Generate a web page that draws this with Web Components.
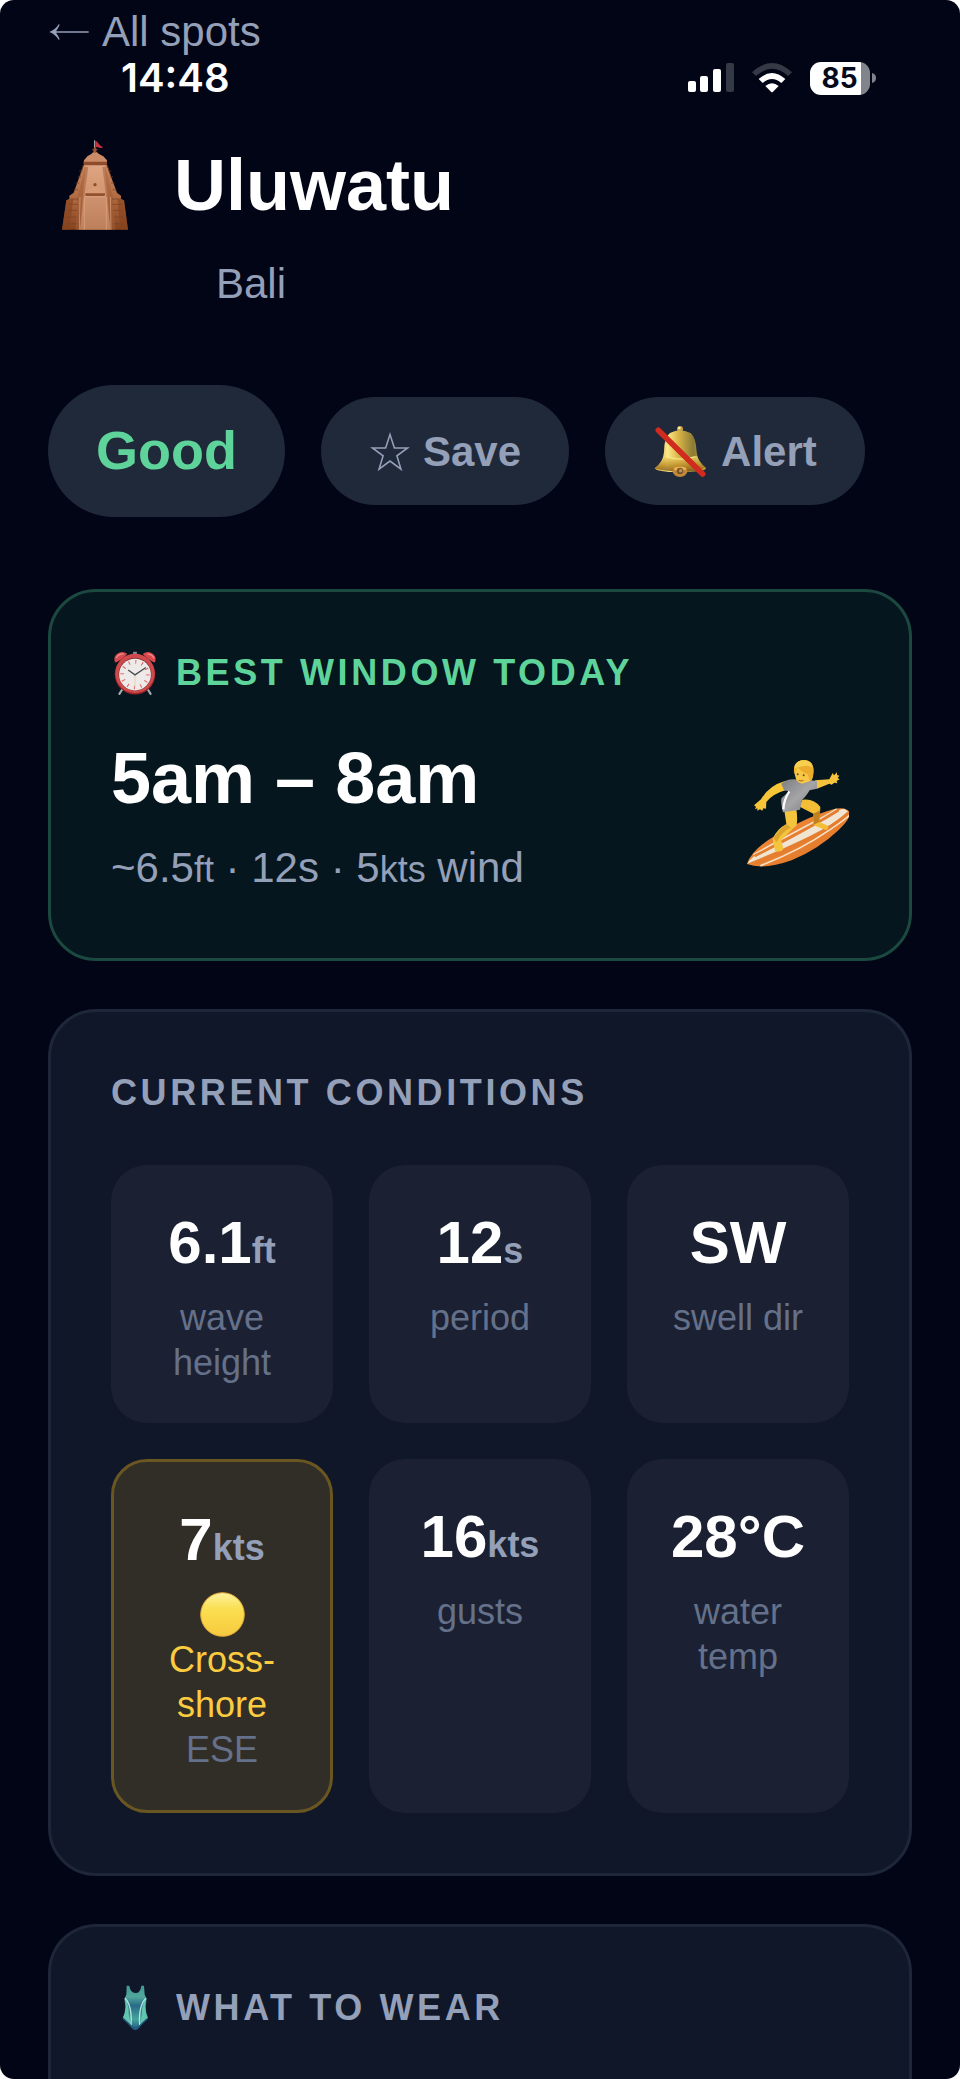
<!DOCTYPE html>
<html lang="en">
<head>
<meta charset="utf-8">
<meta name="viewport" content="width=device-width">
<title>Uluwatu – Bali</title>
<style>
  html { background: #fff; }
  body {
    margin: 0;
    min-height: 100vh;
    display: flex;
    font-family: "Liberation Sans", Arial, sans-serif;
    --muted: #949fb8;
    --dim: #65718a;
    --green: #5fd49a;
    --slate: #20293a;
    color: #fff;
  }
</style>
</head>
<body>
<spot-page></spot-page>

<template id="t-page">
  <style>
    :host {
      flex: 1; min-width: 0; display: flex; flex-direction: column;
      background: #020515; border-radius: 14px; overflow: hidden;
    }
    header { display: flex; flex-direction: column; padding: 0 48px; }
    .back { padding-top: 4px; line-height: 56px; font-size: 42px; }
    .back a { display: flex; align-items: center; gap: 12px; color: var(--muted); text-decoration: none; }
    .title { display: flex; align-items: center; gap: 36px; margin-top: 41px; }
    h1 { margin: 0; font-size: 72px; line-height: 96px; }
    .region { margin: 21px 0 0; padding-left: 168px; font-size: 42px; line-height: 60px; color: var(--muted); }
    .actions { display: flex; align-items: center; gap: 36px; margin: 71px 48px 72px; }
    main { flex: 1; display: flex; flex-direction: column; gap: 48px; padding: 0 48px; }
    .window { display: flex; align-items: center; justify-content: space-between; margin-top: 36px; }
    .hours { margin: 0; font-size: 72px; font-weight: 700; line-height: 96px; }
    .detail { margin: 12px 0 0; font-size: 42px; line-height: 60px; color: var(--muted); }
    small { font-size: 36px; line-height: 36px; }
    .grid { display: grid; grid-template-columns: repeat(3, minmax(0, 1fr)); gap: 36px; margin-top: 51px; }
    .warn { color: #fbcb40; }
    .dot { display: block; margin: 0 auto; }
  </style>
  <header>
    <div class="back"><a href="#spots"><emoji-icon name="arrow" style="--size: 42px"></emoji-icon>All spots</a></div>
    <status-bar></status-bar>
    <div class="title"><emoji-icon name="temple" style="--size: 90px"></emoji-icon><h1>Uluwatu</h1></div>
    <p class="region">Bali</p>
  </header>
  <div class="actions">
    <rating-badge>Good</rating-badge>
    <pill-button><emoji-icon slot="icon" name="star" style="--size: 42px"></emoji-icon>Save</pill-button>
    <pill-button><emoji-icon slot="icon" name="bell" style="--size: 56px"></emoji-icon>Alert</pill-button>
  </div>
  <main>
    <info-card tone="green">
      <emoji-icon slot="icon" name="clock" style="--size: 48px"></emoji-icon>
      <span slot="heading">BEST WINDOW TODAY</span>
      <div class="window">
        <div>
          <p class="hours">5am – 8am</p>
          <p class="detail">~6.5<small>ft</small> · 12s · 5<small>kts</small> wind</p>
        </div>
        <emoji-icon name="surfer" style="--size: 108px"></emoji-icon>
      </div>
    </info-card>
    <info-card>
      <span slot="heading">CURRENT CONDITIONS</span>
      <div class="grid">
        <metric-tile value="6.1" unit="ft">wave height</metric-tile>
        <metric-tile value="12" unit="s">period</metric-tile>
        <metric-tile value="SW">swell dir</metric-tile>
        <metric-tile value="7" unit="kts" tone="warn"><emoji-icon class="dot" name="dot" style="--size: 45px"></emoji-icon><span class="warn">Cross-<br>shore</span><br>ESE</metric-tile>
        <metric-tile value="16" unit="kts">gusts</metric-tile>
        <metric-tile value="28°C">water temp</metric-tile>
      </div>
    </info-card>
    <info-card tone="open">
      <emoji-icon slot="icon" name="swimsuit" style="--size: 48px"></emoji-icon>
      <span slot="heading">WHAT TO WEAR</span>
    </info-card>
  </main>
</template>

<template id="t-status">
  <style>
    :host { display: flex; align-items: center; justify-content: space-between; height: 36px; padding: 0 36px 0 73px; }
    time { font: 600 40px/36px Inter, sans-serif; }
    .right { display: flex; align-items: center; gap: 18px; }
    svg { display: block; }
    .battery { display: flex; align-items: center; gap: 2px; }
    .cell {
      width: 60px; height: 33px; border-radius: 11px; box-sizing: border-box; padding-right: 1px;
      background: linear-gradient(90deg, #fff 51px, #82848c 51px);
      color: #050a1c; text-align: center; font: 700 28px/33px Inter, sans-serif;
    }
  </style>
  <time>14:48</time>
  <div class="right">
    <svg width="46" height="30" viewBox="0 0 46 30">
      <g fill="#fff"><rect y="18" width="8" height="11" rx="2"/><rect x="12" y="13" width="8" height="16" rx="2"/><rect x="25" y="6" width="8" height="23" rx="2"/></g>
      <rect x="38" width="8" height="29" rx="2" fill="#353845"/>
    </svg>
    <svg width="40" height="30" viewBox="0 0 120 90">
      <path d="M0 28Q60-28 120 28L108 39Q60-4 12 39Z" fill="#353845"/>
      <path d="M20 48Q60 12 100 48L88 60Q60 36 32 60Z" fill="#fff"/>
      <path d="M40 69Q60 53 80 69L63 86Q60 89 57 86Z" fill="#fff"/>
    </svg>
    <div class="battery"><div class="cell">85</div>
      <svg width="4" height="10" viewBox="0 0 4 10"><path d="M0 0Q4 1 4 5T0 10Z" fill="#82848c"/></svg>
    </div>
  </div>
</template>

<template id="t-badge">
  <style>
    :host { display: block; padding: 23px 48px 25px; border-radius: 66px; background: var(--slate); color: var(--green); font-size: 54px; font-weight: 700; line-height: 84px; }
  </style>
  <slot></slot>
</template>

<template id="t-pill">
  <style>
    :host { display: block; }
    button {
      display: flex; align-items: center; gap: 12px; padding: 25px 48px 23px; border: 0; border-radius: 54px;
      background: var(--slate); color: var(--muted); font: 700 42px/60px "Liberation Sans", Arial, sans-serif; cursor: pointer;
    }
  </style>
  <button type="button"><slot name="icon"></slot><span><slot></slot></span></button>
</template>

<template id="t-card">
  <style>
    :host { display: block; padding: 60px; border: 3px solid #1e2739; border-radius: 48px; background: #101729; color: #fff; --heading: var(--muted); }
    :host([tone="green"]) { background: #05161e; border-color: #1b493f; --heading: var(--green); }
    :host([tone="open"]) { flex: 1; border-bottom: 0; border-radius: 48px 48px 0 0; padding-bottom: 0; }
    h2 { display: flex; align-items: center; gap: 17px; height: 42px; margin: 0; font-size: 36px; line-height: 42px; letter-spacing: 0.1em; color: var(--heading); }
  </style>
  <section><h2><slot name="icon"></slot><slot name="heading"></slot></h2><slot></slot></section>
</template>

<template id="t-tile">
  <style>
    :host { display: block; padding: 36px 36px 38px; border-radius: 36px; background: #1b2132; text-align: center; }
    :host([tone="warn"]) { padding: 36px 33px 38px; border: 3px solid #695621; background: #312e27; }
    .value { font-size: 60px; font-weight: 700; line-height: 84px; }
    .unit { font-size: 36px; line-height: 36px; color: var(--muted); }
    .label { margin-top: 10px; font-size: 36px; line-height: 45px; color: var(--dim); }
  </style>
  <div class="value"><span class="number"></span><span class="unit"></span></div>
  <div class="label"><slot></slot></div>
</template>

<script>
  const ICONS = {
    arrow: `<svg viewBox="0 0 126 126"><path d="M10 63H122" fill="none" stroke="#949fb8" stroke-width="5"/><path d="M4 63Q22 56 33 39L35 41Q30 53 25 59V67Q30 73 35 85L33 87Q22 70 4 63Z" fill="#949fb8"/></svg>`,
    star: `<svg viewBox="-4 -4 134 134"><path d="M63 7L77 50H119L85 75L98 118L63 92L28 118L41 75L7 50H49Z" fill="none" stroke="#949fb8" stroke-width="5"/></svg>`,
    dot: `<svg viewBox="0 0 45 45"><defs><linearGradient id="a" x2="0" y2="1"><stop stop-color="#fdf3a0"/><stop offset=".35" stop-color="#fae055"/><stop offset=".6" stop-color="#fad748"/><stop offset="1" stop-color="#f6c93f"/></linearGradient></defs><circle cx="22.500" cy="22.500" r="21.800" fill="url(#a)" stroke="#e6a93a"/></svg>`,
    temple: `<svg viewBox="24 59 270 270"><defs>
      <linearGradient id="body" x2="0" y2="1"><stop stop-color="#e0a582"/><stop offset="1" stop-color="#bd7f5c"/></linearGradient>
      <linearGradient id="side" x2="0" y2="1"><stop stop-color="#c98860"/><stop offset=".5" stop-color="#b06b42"/><stop offset="1" stop-color="#85431f"/></linearGradient></defs>
      <path d="M164 60V84" stroke="#c9c4c8" stroke-width="3"/><path d="M166 61Q172 62 176 70Q181 78 190 80Q182 86 174 81L166 80Z" fill="#c4343c"/>
      <path d="M66 328L79 240L88 236V226L101 217L132 132H199L231 217L243 226V236L252 240L264 328Z" fill="url(#side)"/>
      <path d="M137 132H194L212 328H119Z" fill="url(#body)"/>
      <path d="M135 140L110 240L106 328H120L132 230L145 140ZM196 140L222 240L226 328H212L199 230L187 140Z" fill="#a35f38" opacity=".55"/>
      <path d="M79 240L100 236L88 328H66ZM252 240L232 236L242 328H264Z" fill="#87431e" opacity=".6"/>
      <path d="M130 134L119 170M128 152H118M123 170H113M118 188H107M114 208H102M202 134L213 170M204 152H214M209 170H219M213 188H224M218 208H229M88 236H116M86 252H114M84 270H112M82 290H110M80 310H109M216 236H243M217 252H247M219 270H248M221 290H250M222 310H252" stroke="#7d4324" stroke-width="3" opacity=".7"/>
      <path d="M120 230L118 328M133 230V328M199 230V328M211 230L213 328" stroke="#e0a884" stroke-width="3" opacity=".65"/>
      <path d="M132 120L142 108Q154 103 160 95H170Q177 103 190 108L201 120V128Q201 134 195 134H137Q131 134 131 128Z" fill="#cb8b67"/>
      <path d="M131 124H201V129Q200 135 194 135H138Q132 135 131 129Z" fill="#8e4c2a"/>
      <path d="M155 87H174L169 91V97H160V91Z" fill="#9a5630"/><circle cx="165" cy="85" r="4" fill="#9a5630"/>
      <path d="M136 221V214L147 207Q157 205 160 199H170Q173 205 184 207L195 214V221Z" fill="#d79b75"/><path d="M136 219H195V224Q194 228 189 228H142Q137 228 136 224Z" fill="#93502d"/><circle cx="165" cy="193" r="5" fill="#8d4d2c"/><path d="M136 229H195" stroke="#e9b899" stroke-width="2"/>
    </svg>`,
    bell: `<svg viewBox="519 160 168 168"><defs>
      <linearGradient id="gold"><stop stop-color="#c79b30"/><stop offset=".25" stop-color="#fbe98a"/><stop offset=".45" stop-color="#dcb748"/><stop offset=".75" stop-color="#8c7b35"/><stop offset="1" stop-color="#c8a940"/></linearGradient>
      <linearGradient id="rim" x2="0" y2="1"><stop stop-color="#f7df68"/><stop offset=".6" stop-color="#b98a27"/><stop offset="1" stop-color="#7c5317"/></linearGradient></defs>
      <circle cx="600" cy="175" r="9" fill="#c9a040"/><circle cx="598" cy="172" r="4" fill="#fff0ad"/>
      <path d="M524 293Q550 274 552 244Q552 200 570 187Q586 179 600 179T632 187Q648 201 650 244Q653 274 678 293Q676 304 600 305Q528 304 524 293Z" fill="url(#gold)"/>
      <path d="M552 256Q600 268 651 256Q657 276 678 291Q640 303 600 303T524 293Q546 278 552 256Z" fill="url(#rim)" opacity=".8"/>
      <path d="M558 258Q600 273 646 258" fill="none" stroke="#fff19a" stroke-width="4" opacity=".6"/>
      <ellipse cx="600" cy="302" rx="22" ry="17" fill="#c28739"/><path d="M582 292Q600 284 619 292L616 299Q600 292 585 300Z" fill="#efb44e"/><circle cx="600" cy="301" r="10" fill="#7a572a"/><circle cx="602" cy="300" r="5" fill="#bd9455"/>
      <path d="M535 179L668 310" stroke="#d02b1e" stroke-width="17" stroke-linecap="round"/></svg>`,
    clock: `<svg viewBox="-5 -5 154 154">
      <path d="M34 120L22 139M110 120L122 139" stroke="#a5a9b2" stroke-width="7" stroke-linecap="round"/><path d="M66 4H78V14H66Z" fill="#8b8f98"/>
      <path d="M7 36Q2 20 15 10Q30 0 47 10Q36 26 10 38ZM137 36Q142 20 129 10Q114 0 97 10Q108 26 134 38Z" fill="#d6494e"/><path d="M12 24Q20 10 36 11M112 11Q128 13 133 25" fill="none" stroke="#f08c8a" stroke-width="4"/>
      <circle cx="72" cy="76" r="65" fill="#9e2529"/><circle cx="72" cy="73" r="63" fill="#cf4a4c"/><circle cx="72" cy="76" r="53" fill="#8c3334"/><circle cx="72" cy="77" r="51" fill="#eeeae9"/>
      <circle cx="72" cy="77" r="41" fill="none" stroke="#df5c5c" stroke-width="12" stroke-dasharray="3 18.470"/>
      <path d="M72 78V116" stroke="#e8cfa0" stroke-width="3"/><path d="M50 62L72 78L107 54" fill="none" stroke="#4c4c4c" stroke-width="4"/></svg>`,
    surfer: `<svg viewBox="63 90 324 324"><defs><linearGradient id="board" x2="1" y2="1"><stop stop-color="#f28f3d"/><stop offset="1" stop-color="#df7426"/></linearGradient><linearGradient id="suit" x2="1" y2="1"><stop stop-color="#7c7d80"/><stop offset=".5" stop-color="#a5a5a8"/><stop offset="1" stop-color="#77777b"/></linearGradient></defs>
      <path d="M81 402Q92 366 145 330Q250 264 340 238Q374 229 388 245Q396 262 356 300Q295 358 215 391Q130 421 81 402Z" fill="url(#board)"/>
      <path d="M82 401Q91 384 118 370Q200 326 282 282Q345 240 372 236L384 244Q340 285 270 318Q190 357 82 401Z" fill="#efe5d2"/>
      <path d="M101 374Q205 316 292 271Q335 248 350 237M121 407Q240 362 330 299Q376 267 388 256" fill="none" stroke="#f4e1c5" stroke-width="5"/>
      <path d="M104 378Q208 326 298 275Q340 250 356 240M106 400Q230 349 315 300Q360 272 382 252" fill="none" stroke="#e57d31" stroke-width="8"/>
      <path d="M247 209Q282 204 301 231L298 276L324 287Q328 298 317 300L281 286L280 251L239 230Z" fill="#f3bd35"/><path d="M280 251L301 240L298 276L281 284Z" fill="#a96817" opacity=".7"/>
      <path d="M192 235L229 238Q234 271 229 287Q211 301 184 331L190 357Q185 368 165 363L158 326Q171 297 199 282Z" fill="#f4c43d"/><path d="M199 282Q173 304 161 324L169 337Q187 303 213 293Z" fill="#c98a1f" opacity=".55"/>
      <path d="M195 153Q146 167 123 208L102 226L108 230L105 238L112 235V242L120 238L127 242L130 235L138 236L139 216Q157 191 201 179Z" fill="#f6c638"/>
      <path d="M285 151L328 148L338 129L342 136L351 127V135L358 137L353 144L359 148L350 153L352 160L343 158L335 164L328 161L291 176Z" fill="#f5c33c"/>
      <path d="M184 161Q201 146 225 148L245 158L272 151L291 153V176L269 181Q257 201 246 210L240 239L189 247Q182 220 184 205L208 184L192 181Z" fill="url(#suit)"/>
      <path d="M208 184Q192 207 190 238" fill="none" stroke="#fafafa" stroke-width="7"/>
      <path d="M222 125Q219 93 250 90Q284 90 280 130Q279 151 269 154L255 158Q242 165 229 151Z" fill="#f7c746"/>
      <path d="M222 129Q219 95 250 90Q284 90 280 130Q279 148 270 153L263 132Q246 129 234 112Q227 116 226 128Z" fill="#ecad2f"/>
      <path d="M224 116Q225 92 252 91Q275 93 278 114Q265 100 224 116Z" fill="#f8cf4e"/>
      <circle cx="233" cy="133" r="3" fill="#6d4a20"/><circle cx="251" cy="136" r="3" fill="#6d4a20"/><path d="M236 151Q243 155 250 151" fill="none" stroke="#a56518" stroke-width="3"/>
    </svg>`,
    swimsuit: `<svg viewBox="240 400 144 144"><defs><linearGradient id="swim" x2="0" y2="1"><stop stop-color="#3f9a95"/><stop offset=".25" stop-color="#51a79c"/><stop offset=".45" stop-color="#286a87"/><stop offset=".75" stop-color="#45a49d"/><stop offset="1" stop-color="#1e5682"/></linearGradient></defs>
      <path d="M287 405H295Q298 426 313 427T331 405H339L341 432L347 444L344 468Q344 482 351 503Q334 517 324 532Q313 545 302 532Q291 517 275 503Q283 486 283 468L280 444L286 432Z" fill="url(#swim)"/>
      <path d="M282 443Q295 464 293 490L299 522L276 503Q283 486 284 468ZM345 443Q331 464 333 490L327 522L350 503Q343 486 343 468Z" fill="#62c5b0"/>
      <path d="M282 443Q304 465 300 524M345 443Q322 465 326 524" fill="none" stroke="#b6e5df" stroke-width="4"/>
      <path d="M276 503L300 525Q313 538 326 525L350 503" fill="none" stroke="#1d5b79" stroke-width="4"/></svg>`
  };

  class TemplateElement extends HTMLElement {
    constructor() {
      super();
      const source = document.getElementById(this.constructor.template);
      this.attachShadow({ mode: "open" }).append(source.content.cloneNode(true));
    }
  }

  customElements.define("emoji-icon", class extends HTMLElement {
    connectedCallback() {
      if (this.shadowRoot) return;
      this.attachShadow({ mode: "open" }).innerHTML =
        `<style>:host{display:block;flex:none;width:var(--size);height:var(--size)}svg{display:block;width:100%;height:100%}</style>` +
        ICONS[this.getAttribute("name")];
    }
  });

  customElements.define("metric-tile", class extends TemplateElement {
    static template = "t-tile";
    connectedCallback() {
      this.shadowRoot.querySelector(".number").textContent = this.getAttribute("value");
      this.shadowRoot.querySelector(".unit").textContent = this.getAttribute("unit") || "";
    }
  });

  customElements.define("status-bar", class extends TemplateElement { static template = "t-status"; });
  customElements.define("rating-badge", class extends TemplateElement { static template = "t-badge"; });
  customElements.define("pill-button", class extends TemplateElement { static template = "t-pill"; });
  customElements.define("info-card", class extends TemplateElement { static template = "t-card"; });
  customElements.define("spot-page", class extends TemplateElement { static template = "t-page"; });
</script>
</body>
</html>
